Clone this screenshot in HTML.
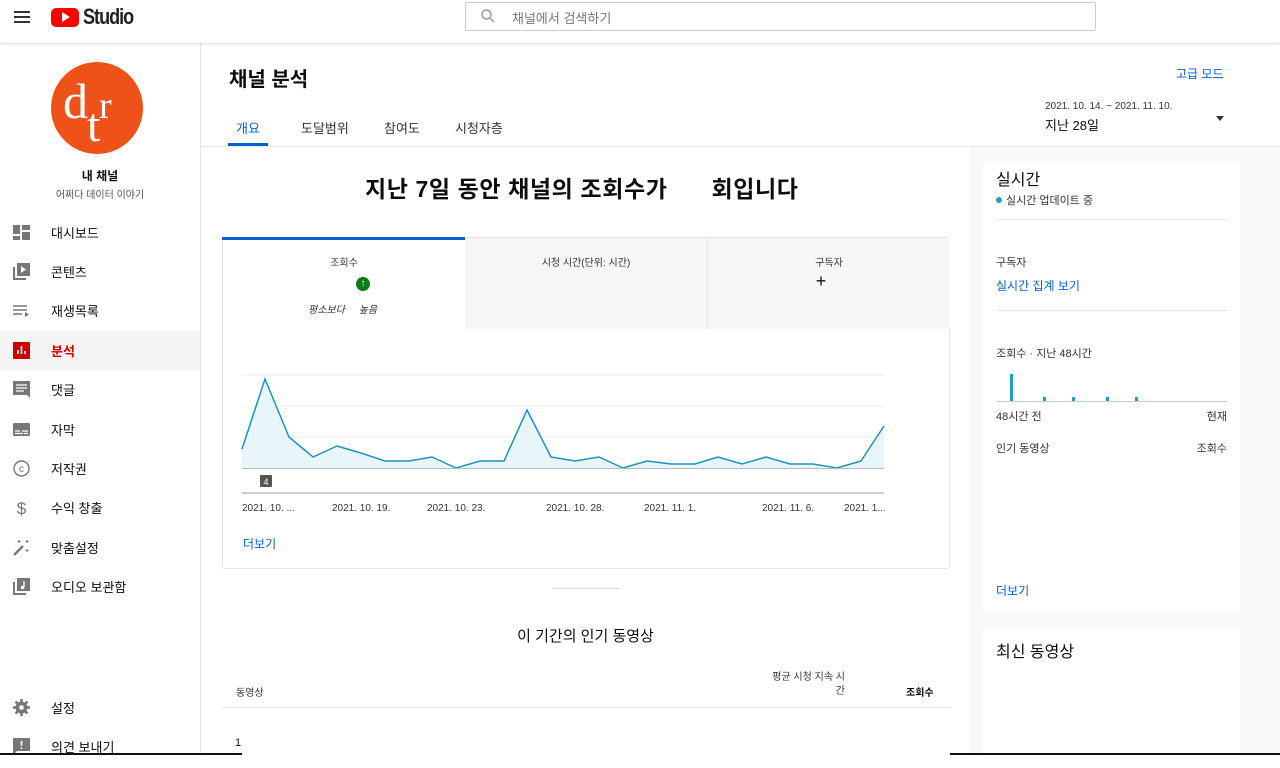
<!DOCTYPE html>
<html><head><meta charset="utf-8"><style>
*{box-sizing:border-box;margin:0;padding:0}
body{width:1280px;height:755px;overflow:hidden;font-family:"Liberation Sans","Noto Sans CJK KR",sans-serif;color:#0d0d0d;background:#fff;position:relative}
.abs{position:absolute}
.top{left:0;top:0;width:1280px;height:43px;background:#fff;box-shadow:0 1px 3px rgba(0,0,0,.15);z-index:5}
.side{left:0;top:43px;width:201px;height:712px;border-right:1px solid #e5e5e5;background:#fff}
.nav{position:absolute;left:0;width:200px;height:39px;display:flex;align-items:center;font-size:13px;color:#0d0d0d}
.nav .ic{position:absolute;left:13px;top:11px;width:17px;height:17px}
.nav span{position:absolute;left:51px}
.right{left:970px;top:147px;width:310px;height:608px;background:#f9f9f9}
.card{background:#fff;border-radius:6px;position:absolute}
.s{font-size:11px;color:#333}
.blue{color:#065fd4}
.lg{position:absolute;font-family:'Liberation Serif',serif;color:#fff;line-height:1}
</style></head><body>

<div class="abs top">
  <div class="abs" style="left:14px;top:11px;width:16px;height:2px;background:#333;box-shadow:0 5px 0 #333,0 10px 0 #333"></div>
  <div class="abs" style="left:51px;top:8px;width:28px;height:19px;background:#ff0000;border-radius:5px"></div>
  <div class="abs" style="left:62px;top:12px;width:0;height:0;border-left:8px solid #fff;border-top:5px solid transparent;border-bottom:5px solid transparent"></div>
  <div class="abs" style="left:83px;top:5px;font-size:22px;line-height:24px;font-weight:bold;letter-spacing:-1.2px;color:#212121;transform:scaleX(.82);transform-origin:left">Studio</div>
  <div class="abs" style="left:465px;top:2px;width:631px;height:29px;border:1px solid #ccc;border-radius:2px"></div>
  <svg class="abs" style="left:480px;top:8px" width="16" height="16" viewBox="0 0 16 16"><circle cx="6.5" cy="6.5" r="4.5" fill="none" stroke="#999" stroke-width="1.5"/><path d="M10 10l4 4" stroke="#999" stroke-width="1.5"/></svg>
  <div class="abs" style="left:512px;top:8px;font-size:13px;color:#777">채널에서 검색하기</div>
</div>

<div class="abs side">
  <div class="abs" style="left:51px;top:19px;width:92px;height:92px;border-radius:50%;background:#ee5219;overflow:hidden">
    <div class="lg" style="left:12px;top:14px;font-size:50px">d</div>
    <div class="lg" style="left:48px;top:25px;font-size:38px">r</div>
    <div class="lg" style="left:36px;top:40px;font-size:48px">t</div>
  </div>
  <div class="abs" style="left:0;width:200px;top:124px;text-align:center;font-size:12px;font-weight:bold">내 채널</div>
  <div class="abs" style="left:0;width:200px;top:143px;text-align:center;font-size:10px;color:#555">어쩌다 데이터 이야기</div>
</div>

<div class="nav" style="top:213px"><svg class="ic" viewBox="0 0 17 17"><rect x="0" y="1" width="7" height="9" fill="#777"/><rect x="9" y="1" width="8" height="5" fill="#777"/><rect x="0" y="12" width="7" height="4" fill="#777"/><rect x="9" y="8" width="8" height="8" fill="#777"/></svg><span>대시보드</span></div>
<div class="nav" style="top:252px"><svg class="ic" viewBox="0 0 17 17"><rect x="4" y="0" width="13" height="13" fill="#777"/><path d="M8 3l5 3.5-5 3.5z" fill="#fff"/><path d="M1 4v12h12" fill="none" stroke="#777" stroke-width="2"/></svg><span>콘텐츠</span></div>
<div class="nav" style="top:291px"><svg class="ic" viewBox="0 0 17 17"><path d="M0 4h14M0 8h14M0 12h9" stroke="#777" stroke-width="1.6"/><path d="M12 10l4 2.5-4 2.5z" fill="#777"/></svg><span>재생목록</span></div>
<div class="nav" style="top:331px;background:#f4f4f4"><svg class="ic" viewBox="0 0 17 17"><rect width="17" height="17" rx="1" fill="#c00"/><path d="M5 12V8M8.5 12V4M12 12V9" stroke="#fff" stroke-width="1.6"/></svg><span style="color:#c00;font-weight:bold">분석</span></div>
<div class="nav" style="top:370px"><svg class="ic" viewBox="0 0 17 17"><path d="M0 0h17v17l-3-3H0z" fill="#777"/><path d="M3 4h11M3 7h11M3 10h8" stroke="#fff" stroke-width="1.3"/></svg><span>댓글</span></div>
<div class="nav" style="top:410px"><svg class="ic" viewBox="0 0 17 17"><rect y="2" width="17" height="13" rx="1" fill="#777"/><path d="M2 10h5M9 10h6M2 12.5h8M11 12.5h4" stroke="#fff" stroke-width="1.2"/></svg><span>자막</span></div>
<div class="nav" style="top:449px"><svg class="ic" viewBox="0 0 17 17"><circle cx="8.5" cy="8.5" r="7.5" fill="none" stroke="#777" stroke-width="1.4"/><text x="8.5" y="12" font-size="10" text-anchor="middle" fill="#777" font-family="Liberation Sans">c</text></svg><span>저작권</span></div>
<div class="nav" style="top:488px"><svg class="ic" viewBox="0 0 17 17"><text x="8.5" y="15" font-size="17" text-anchor="middle" fill="#777" font-family="Liberation Sans">$</text></svg><span>수익 창출</span></div>
<div class="nav" style="top:528px"><svg class="ic" viewBox="0 0 17 17"><path d="M1 16l9-9" stroke="#777" stroke-width="2.5"/><path d="M6 1v3M4.5 2.5h3M14 1v3M12.5 2.5h3M14 10v3M12.5 11.5h3" stroke="#777"/></svg><span>맞춤설정</span></div>
<div class="nav" style="top:567px"><svg class="ic" viewBox="0 0 17 17"><rect x="4" y="0" width="13" height="13" fill="#777"/><path d="M11 3v6.5" stroke="#fff" stroke-width="1.3"/><circle cx="9.5" cy="9.5" r="1.7" fill="#fff"/><path d="M1 4v12h12" fill="none" stroke="#777" stroke-width="2"/></svg><span>오디오 보관함</span></div>
<div class="nav" style="top:688px"><svg class="ic" viewBox="0 0 17 17"><circle cx="8.5" cy="8.5" r="6" fill="#777"/><path d="M8.5 0v17M0 8.5h17M2.5 2.5l12 12M14.5 2.5l-12 12" stroke="#777" stroke-width="2.6"/><circle cx="8.5" cy="8.5" r="2.3" fill="#fff"/></svg><span>설정</span></div>
<div class="nav" style="top:727px"><svg class="ic" viewBox="0 0 17 17"><path d="M0 0h17v13H4l-4 4z" fill="#777"/><path d="M8.5 3v5M8.5 9.5v1.5" stroke="#fff" stroke-width="1.6"/></svg><span>의견 보내기</span></div>

<div class="abs" style="left:229px;top:63px;font-size:20px;font-weight:bold">채널 분석</div>
<div class="abs blue" style="left:1176px;top:65px;font-size:12px">고급 모드</div>
<div class="abs" style="left:1045px;top:101px;font-size:10px;color:#333">2021. 10. 14. ~ 2021. 11. 10.</div>
<div class="abs" style="left:1045px;top:115px;font-size:13px">지난 28일</div>
<div class="abs" style="left:1216px;top:116px;border-top:5px solid #333;border-left:4px solid transparent;border-right:4px solid transparent"></div>
<div class="abs blue" style="left:236px;top:118px;font-size:13px;color:#065fd4">개요</div>
<div class="abs" style="left:228px;top:143px;width:40px;height:3px;background:#065fd4"></div>
<div class="abs" style="left:301px;top:118px;font-size:13px;color:#333">도달범위</div>
<div class="abs" style="left:384px;top:118px;font-size:13px;color:#333">참여도</div>
<div class="abs" style="left:455px;top:118px;font-size:13px;color:#333">시청자층</div>
<div class="abs" style="left:201px;top:146px;width:1079px;height:1px;background:#e5e5e5"></div>

<div class="abs right">
  <div class="card" style="left:13px;top:14px;width:257px;height:452px">
    <div class="abs" style="left:13px;top:10px;font-size:16px;line-height:20px">실시간</div>
    <div class="abs" style="left:13px;top:36px;width:6px;height:6px;border-radius:50%;background:#1a9fc9"></div>
    <div class="abs s" style="left:23px;top:31px">실시간 업데이트 중</div>
    <div class="abs" style="left:13px;top:58px;width:231px;height:1px;background:#e5e5e5"></div>
    <div class="abs s" style="left:13px;top:93px">구독자</div>
    <div class="abs blue" style="left:13px;top:116px;font-size:12px">실시간 집계 보기</div>
    <div class="abs" style="left:13px;top:149px;width:231px;height:1px;background:#e5e5e5"></div>
    <div class="abs s" style="left:13px;top:184px">조회수 · 지난 48시간</div>
    <div class="abs" style="left:13px;top:240px;width:231px;height:1px;background:#ccc"></div>
    <div class="abs" style="left:27px;top:213px;width:3px;height:27px;background:#1a9fc9"></div>
    <div class="abs" style="left:60px;top:236px;width:3px;height:4px;background:#1a9fc9"></div>
    <div class="abs" style="left:89px;top:236px;width:3px;height:4px;background:#1a9fc9"></div>
    <div class="abs" style="left:123px;top:236px;width:3px;height:4px;background:#1a9fc9"></div>
    <div class="abs" style="left:152px;top:236px;width:3px;height:4px;background:#1a9fc9"></div>
    <div class="abs s" style="left:13px;top:247px">48시간 전</div>
    <div class="abs s" style="right:13px;top:247px">현재</div>
    <div class="abs s" style="left:13px;top:279px">인기 동영상</div>
    <div class="abs s" style="right:13px;top:279px">조회수</div>
    <div class="abs blue" style="left:13px;top:421px;font-size:12px">더보기</div>
  </div>
  <div class="card" style="left:13px;top:481px;width:257px;height:140px">
    <div class="abs" style="left:13px;top:10px;font-size:16px">최신 동영상</div>
  </div>
</div>

<div class="abs" style="left:365px;top:170px;font-size:23px;font-weight:bold;letter-spacing:0.6px;white-space:nowrap">지난 7일 동안 채널의 조회수가<span style="display:inline-block;width:44px"></span>회입니다</div>

<div class="abs" style="left:222px;top:237px;width:728px;height:332px;border:1px solid #e5e5e5;border-radius:3px">
  <div class="abs" style="left:-1px;top:-1px;width:243px;height:3px;background:#065fd4"></div>
  <div class="abs" style="left:242px;top:0;width:485px;height:91px;background:#f6f6f6"></div>
  <div class="abs" style="left:484px;top:0;width:1px;height:91px;background:#e5e5e5"></div>
  <div class="abs s" style="left:0;width:242px;top:16px;text-align:center;font-size:10px">조회수</div>
  <div class="abs" style="left:133px;top:39px;width:14px;height:14px;border-radius:50%;background:#0a7d14;color:#fff;font-size:10px;text-align:center;line-height:14px;font-weight:bold">↑</div>
  <div class="abs s" style="left:85px;top:63px;font-size:10px;font-style:italic">평소보다 &nbsp; &nbsp; 높음</div>
  <div class="abs s" style="left:242px;width:242px;top:16px;text-align:center;font-size:10px">시청 시간(단위: 시간)</div>
  <div class="abs s" style="left:485px;width:242px;top:16px;text-align:center;font-size:10px">구독자</div>
  <div class="abs" style="left:477px;width:242px;top:33px;text-align:center;font-size:18px">+</div>
  <div class="abs blue" style="left:20px;top:297px;font-size:12px">더보기</div>
</div>

<svg class="abs" style="left:0;top:0" width="960" height="520">
  <path d="M242 375H884M242 406H884M242 437H884" stroke="#eee"/>
  <path d="M242 449L265 379L289 437L313 457L337 446L361 453L385 461L409 461L432 457L456 468L480 461L504 461L527 410L551 457L575 461L599 457L623 468L647 461L671 464L695 464L718 457L742 464L766 457L790 464L813 464L837 468L861 461L884 426V468H242Z" fill="#e8f5fa"/>
  <path d="M242 449L265 379L289 437L313 457L337 446L361 453L385 461L409 461L432 457L456 468L480 461L504 461L527 410L551 457L575 461L599 457L623 468L647 461L671 464L695 464L718 457L742 464L766 457L790 464L813 464L837 468L861 461L884 426" fill="none" stroke="#1a94bf" stroke-width="1.5"/>
  <path d="M242 468.5H884" stroke="#bbb"/>
  <path d="M242 493H884" stroke="#ccc" stroke-width="2"/>
  <rect x="260" y="475" width="12" height="12" rx="1" fill="#555"/>
  <text x="266" y="485" font-size="9" fill="#fff" text-anchor="middle" font-family="Liberation Sans">4</text>
  <g font-size="10" fill="#333" font-family="Liberation Sans">
    <text x="242" y="511">2021. 10. ...</text><text x="332" y="511">2021. 10. 19.</text><text x="427" y="511">2021. 10. 23.</text><text x="546" y="511">2021. 10. 28.</text><text x="644" y="511">2021. 11. 1.</text><text x="762" y="511">2021. 11. 6.</text><text x="844" y="511">2021. 1...</text>
  </g>
</svg>

<div class="abs" style="left:552px;top:588px;width:68px;height:1px;background:#ddd"></div>
<div class="abs" style="left:201px;top:625px;width:769px;text-align:center;font-size:15px">이 기간의 인기 동영상</div>
<div class="abs s" style="left:236px;top:684px;font-size:10px">동영상</div>
<div class="abs s" style="left:760px;top:671px;width:85px;text-align:right;font-size:10px;line-height:14px">평균 시청 지속 시<br>간</div>
<div class="abs" style="left:906px;top:684px;font-size:10px;font-weight:bold">조회수</div>
<div class="abs" style="left:222px;top:707px;width:728px;height:1px;background:#e5e5e5"></div>
<div class="abs" style="left:235px;top:737px;font-size:11px">1</div>
<div class="abs" style="left:0;top:753px;width:242px;height:2px;background:#111"></div>
<div class="abs" style="left:950px;top:753px;width:330px;height:2px;background:#111"></div>
</body></html>
